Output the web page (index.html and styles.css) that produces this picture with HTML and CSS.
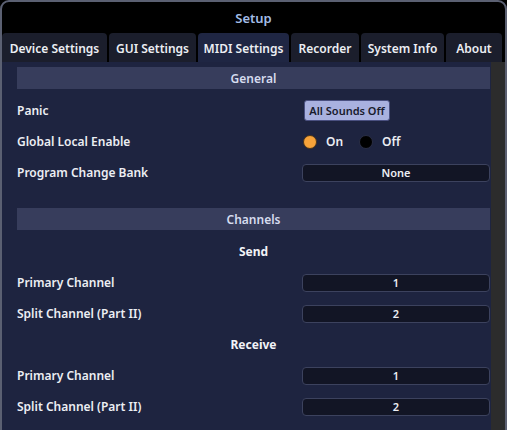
FILE: index.html
```html
<!DOCTYPE html>
<html>
<head>
<meta charset="utf-8">
<link rel="stylesheet" href="styles.css">
</head>
<body>
<div class="window">
  <div class="title">Setup</div>
  <div class="tabs">
    <div class="tab">Device Settings</div>
    <div class="tab">GUI Settings</div>
    <div class="tab active">MIDI Settings</div>
    <div class="tab">Recorder</div>
    <div class="tab">System Info</div>
    <div class="tab">About</div>
  </div>
  <div class="body">
    <div class="content">
      <div class="section">General</div>
      <div class="rows">
        <div class="row">
          <div class="label">Panic</div>
          <div class="control"><button class="btn">All Sounds Off</button></div>
        </div>
        <div class="row">
          <div class="label">Global Local Enable</div>
          <div class="control radios">
            <span class="radio on"></span><span class="rlabel">On</span>
            <span class="radio"></span><span class="rlabel">Off</span>
          </div>
        </div>
        <div class="row">
          <div class="label">Program Change Bank</div>
          <div class="control"><div class="field">None</div></div>
        </div>
      </div>
      <div class="section second">Channels</div>
      <div class="rows">
        <div class="row"><div class="sub">Send</div></div>
        <div class="row">
          <div class="label">Primary Channel</div>
          <div class="control"><div class="field">1</div></div>
        </div>
        <div class="row">
          <div class="label">Split Channel (Part II)</div>
          <div class="control"><div class="field">2</div></div>
        </div>
        <div class="row"><div class="sub">Receive</div></div>
        <div class="row">
          <div class="label">Primary Channel</div>
          <div class="control"><div class="field">1</div></div>
        </div>
        <div class="row">
          <div class="label">Split Channel (Part II)</div>
          <div class="control"><div class="field">2</div></div>
        </div>
      </div>
    </div>
    <div class="scrollbar"></div>
  </div>
</div>
</body>
</html>
```

FILE: styles.css
```css
html, body {
  margin: 0;
  padding: 0;
  background: #000;
  height: 100%;
  overflow: hidden;
}
body {
  font-family: "Noto Sans", "DejaVu Sans", sans-serif;
  font-weight: 600;
  font-size: 12px;
  color: #e6e8ef;
}
.window {
  box-sizing: border-box;
  width: 507px;
  height: 440px;
  border: 2px solid #5b6072;
  border-radius: 9px 9px 0 0;
  background: #000;
  display: flex;
  flex-direction: column;
}
.title {
  height: 31px;
  display: flex;
  align-items: center;
  justify-content: center;
  color: #a3bde6;
  font-size: 13px;
  font-weight: 600;
}
.tabs {
  display: grid;
  grid-template-columns: 105px 87px 91px 68px 83px 56px;
  column-gap: 2px;
  height: 29px;
}
.tab {
  background: #1b1e2c;
  border-radius: 4px 4px 0 0;
  display: flex;
  align-items: center;
  justify-content: center;
  color: #eceef3;
  padding-top: 1px;
}
.tab.active {
  background: #1f2643;
}
.body {
  flex: 1;
  display: flex;
}
.content {
  flex: 1;
  background: #1e2440;
  padding: 5px 1px 0 15px;
}
.scrollbar {
  width: 14px;
  background: #2c2c2c;
}
.section {
  height: 22px;
  background: #373d5c;
  display: flex;
  align-items: center;
  justify-content: center;
  color: #d6dcef;
}
.section.second {
  margin-top: 20px;
}
.rows {
  padding-top: 6px;
  display: flex;
  flex-direction: column;
}
.row {
  height: 31px;
  display: grid;
  grid-template-columns: 1fr 188px;
  align-items: center;
}
.sub {
  grid-column: 1 / 3;
  text-align: center;
  color: #f2f3f7;
  font-weight: 700;
}
.label {
  color: #eceef3;
}
.control {
  display: flex;
  align-items: center;
}
.btn {
  margin-left: 2px;
  height: 21px;
  width: 86px;
  background: #a9b1df;
  border: 1px solid #4a5080;
  border-radius: 3px;
  color: #181a2c;
  font-family: inherit;
  font-weight: 600;
  font-size: 11px;
  padding: 0;
  white-space: nowrap;
}
.radios {
  padding-left: 1px;
}
.radio {
  width: 12px;
  height: 12px;
  border-radius: 50%;
  background: #000;
  border: 1px solid #2a2e44;
}
.radio.on {
  background: #f7a33a;
  border-color: #4a3418;
}
.rlabel {
  margin-left: 9px;
  margin-right: 16px;
  color: #eceef3;
}
.field {
  box-sizing: border-box;
  width: 188px;
  height: 18px;
  background: #121525;
  border: 1px solid #3c425e;
  border-radius: 4px;
  display: flex;
  align-items: center;
  justify-content: center;
  font-size: 11px;
  color: #eceef3;
}
```
